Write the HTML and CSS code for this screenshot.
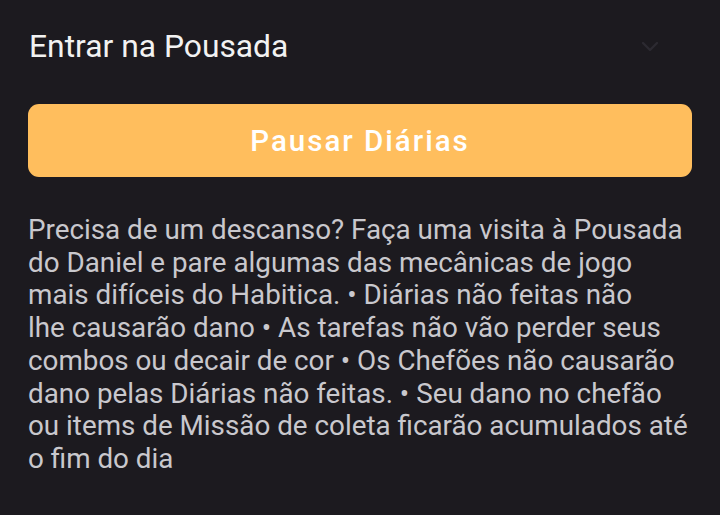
FILE: index.html
```html
<!DOCTYPE html>
<html lang="pt">
<head>
<meta charset="utf-8">
<link rel="stylesheet" href="styles.css">
</head>
<body>
<div class="screen">
  <div class="header">
    <span class="title">Entrar na Pousada</span>
    <svg class="chev" width="24" height="24" viewBox="0 0 24 24"><path d="M5 9l7 7 7-7" fill="none" stroke="#2c2a31" stroke-width="2.4" stroke-linecap="round" stroke-linejoin="round"/></svg>
  </div>
  <button class="btn">Pausar Diárias</button>
  <p class="desc">Precisa de um descanso? Faça uma visita à Pousada do Daniel e pare algumas das mecânicas de jogo mais difíceis do Habitica. • Diárias não feitas não<br>lhe causarão dano • As tarefas não vão perder seus combos ou decair de cor • Os Chefões não causarão dano pelas Diárias não feitas. • Seu dano no chefão ou items de Missão de coleta ficarão acumulados até o fim do dia</p>
</div>
</body>
</html>
```

FILE: styles.css
```css
html, body {
  margin: 0;
  padding: 0;
  background: #1c1a1f;
}
.screen {
  width: 720px;
  height: 515px;
  box-sizing: border-box;
  padding: 0 28px;
  font-family: Roboto, "Noto Sans", sans-serif;
  overflow: hidden;
}
.header {
  display: flex;
  align-items: center;
  justify-content: space-between;
  height: 92px;
  padding-right: 30px;
}
.title {
  color: #f2f2f2;
  font-size: 31.8px;
  padding-left: 1px;
}
.chev {
  display: block;
}
.btn {
  display: block;
  width: 100%;
  height: 73px;
  margin-top: 12px;
  border: none;
  border-radius: 11px;
  background: #ffbe5d;
  color: #ffffff;
  font-family: Roboto, sans-serif;
  font-weight: 500;
  font-size: 29.5px;
  letter-spacing: 2px;
}
.desc {
  margin: 37px 0 0;
  color: #c9c8cd;
  font-size: 27.8px;
  line-height: 32.7px;
}
```
